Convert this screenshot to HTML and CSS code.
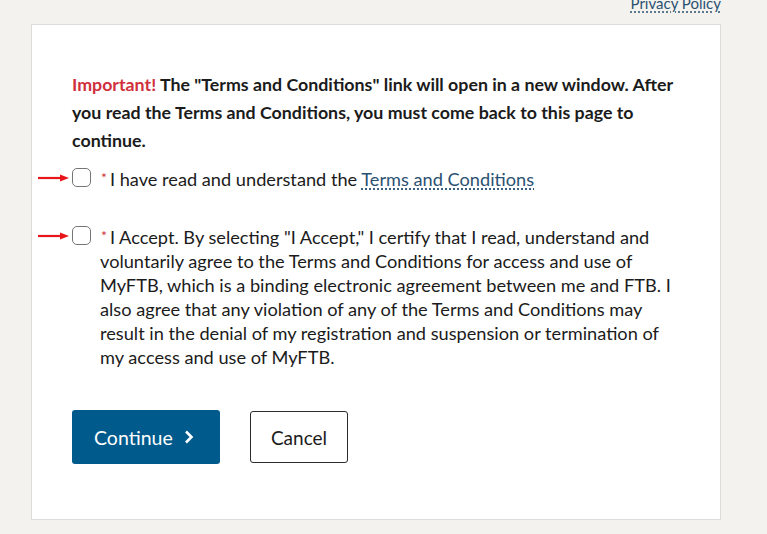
FILE: index.html
```html
<!DOCTYPE html>
<html lang="en">
<head>
<meta charset="utf-8">
<title>Terms and Conditions</title>
<link rel="stylesheet" href="styles.css">
</head>
<body>
<div class="page">
  <div class="topbar"><a class="privacy" href="#">Privacy Policy</a></div>
  <main class="card">
    <p class="notice"><span class="important">Important!</span> The "Terms and Conditions" link will open in a new window. After you read the Terms and Conditions, you must come back to this page to continue.</p>
    <div class="check-row row-one">
      <svg class="arrow" width="32" height="8" viewBox="0 0 32 8"><path d="M0 4H24" stroke="#e8161b" stroke-width="2.2"/><path d="M22 0.5L31 4L22 7.5Z" fill="#e8161b"/></svg>
      <span class="box"></span>
      <label class="label"><span class="req">*</span>I have read and understand the <a class="terms" href="#">Terms and Conditions</a></label>
    </div>
    <div class="check-row row-two">
      <svg class="arrow" width="32" height="8" viewBox="0 0 32 8"><path d="M0 4H24" stroke="#e8161b" stroke-width="2.2"/><path d="M22 0.5L31 4L22 7.5Z" fill="#e8161b"/></svg>
      <span class="box"></span>
      <label class="label"><span class="req">*</span>I Accept. By selecting "I Accept," I certify that I read, understand and voluntarily agree to the Terms and Conditions for access and use of MyFTB, which is a binding electronic agreement between me and FTB. I also agree that any violation of any of the Terms and Conditions may result in the denial of my registration and suspension or termination of my access and use of MyFTB.</label>
    </div>
    <div class="actions">
      <button class="btn primary">Continue <svg class="chev" width="10" height="14" viewBox="0 0 10 14"><path d="M2 1.5L7.5 7L2 12.5" fill="none" stroke="#fff" stroke-width="2.6"/></svg></button>
      <button class="btn secondary">Cancel</button>
    </div>
  </main>
</div>
</body>
</html>
```
FILE: styles.css
```css
* { box-sizing: border-box; }
html, body { margin: 0; padding: 0; }
body {
  background: #f3f2ef;
  font-family: "Lato", "Open Sans", sans-serif;
  color: #1b1b1b;
  width: 767px;
  height: 534px;
  overflow: hidden;
}
.page { padding-left: 31px; width: 721px; }
.topbar {
  margin-top: -7px;
  display: flex;
  justify-content: flex-end;
  align-items: flex-start;
  height: 31px;
}
.privacy {
  font-size: 15px;
  line-height: 20px;
  color: #2b5172;
  text-decoration: underline dotted;
  text-underline-offset: 3px;
}
.card {
  background: #fff;
  border: 1px solid #dcdcd8;
  height: 496px;
  padding: 45px 40px 0 40px;
}
.notice {
  margin: 0;
  font-size: 17.8px;
  line-height: 28px;
  font-weight: 700;
  color: #1b1b1b;
}
.important { color: #d0303b; }
.check-row {
  position: relative;
  display: flex;
  align-items: flex-start;
}
.row-one { margin-top: 12px; }
.row-two { margin-top: 33px; }
.arrow { position: absolute; left: -34px; top: 8px; }
.box {
  flex: none;
  width: 19px;
  height: 19px;
  border: 1px solid #767676;
  border-radius: 5px;
  margin-top: 2px;
  margin-right: 9px;
  background: #fff;
}
.label {
  font-size: 18.2px;
  line-height: 24px;
  color: #1b1b1b;
}
.req {
  color: #d0303b;
  font-size: 14px;
  vertical-align: 3px;
  margin-right: 3px;
  margin-left: 1px;
}
.terms {
  color: #2b5172;
  text-decoration: underline dotted;
  text-underline-offset: 3px;
}
.actions {
  display: flex;
  align-items: center;
  gap: 30px;
  margin-top: 41px;
}
.btn {
  font-family: inherit;
  font-size: 19px;
  cursor: pointer;
  border-radius: 3px;
}
.primary {
  width: 148px;
  height: 54px;
  background: #005a8c;
  color: #fff;
  border: none;
  display: flex;
  align-items: center;
  justify-content: flex-start;
  padding-left: 22px;
  gap: 11px;
  font-size: 19.5px;
}
.secondary {
  width: 98px;
  height: 52px;
  background: #fff;
  color: #1b1b1b;
  border: 1px solid #2b2b2b;
}
```
